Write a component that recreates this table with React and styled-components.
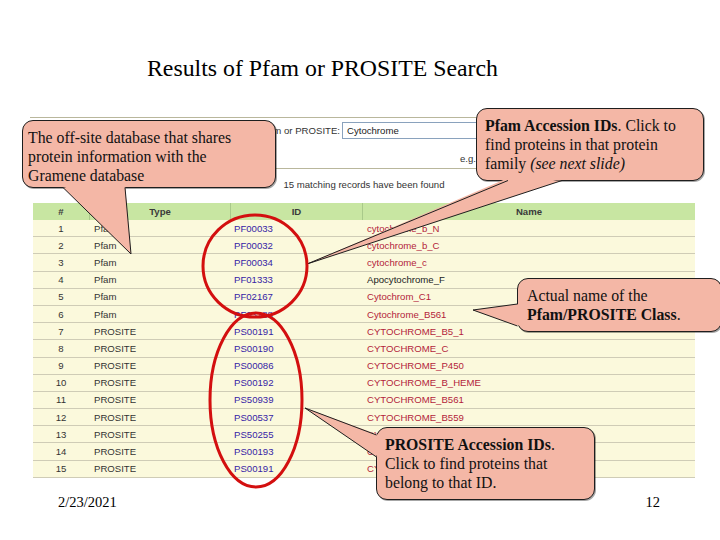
import React from 'react';
import styled, { createGlobalStyle } from 'styled-components';

const Global = createGlobalStyle`
  html, body { margin: 0; padding: 0; background: #fff; }
  body { width: 720px; height: 540px; overflow: hidden; }
`;

const Slide = styled.div`
  position: relative;
  width: 720px;
  height: 540px;
  background: #fff;
  display: flex;
  flex-direction: column;
  font-family: "Liberation Serif", "Times New Roman", serif;
  color: #000;
`;

const Title = styled.h1`
  margin: 54px 0 0 147px;
  font-weight: normal;
  font-size: 23.8px;
  line-height: 28px;
`;

const Panel = styled.div`
  margin: 35px 0 0 30px;
  width: 668px;
  display: flex;
  flex-direction: column;
  font-family: "Liberation Sans", Arial, sans-serif;
  font-size: 9.6px;
  color: #333;
`;

const SearchArea = styled.div`
  height: 50px;
  border-top: 1px solid #b9b79c;
  border-bottom: 1px solid #b9b79c;
  display: flex;
  flex-direction: column;
`;

const SearchRow = styled.div`
  display: grid;
  grid-template-columns: 310px 140px;
  align-items: center;
  column-gap: 2px;
  margin-top: 4px;
`;

const Label = styled.span`
  text-align: right;
`;

const Input = styled.div`
  height: 15px;
  border: 1px solid #8aa2bd;
  padding: 0 4px;
  line-height: 15px;
  color: #222;
`;

const Hint = styled.div`
  margin: 14px 0 0 430px;
`;

const Count = styled.div`
  margin-top: 8px;
  line-height: 16px;
  text-align: center;
`;

const Table = styled.div`
  margin: 10px 0 0 3px;
  width: 662px;
  display: flex;
  flex-direction: column;
`;

const cols = '56px 141px 132px 1fr';

const HeadRow = styled.div`
  display: grid;
  grid-template-columns: ${cols};
  height: 17px;
  background: #c8e6a2;
`;

const HeadCell = styled.div`
  display: flex;
  align-items: center;
  justify-content: center;
  font-weight: bold;
  color: #3a3a3a;
  border-left: ${p => (p.$first ? 'none' : '1px solid #a9c98a')};
`;

const Row = styled.div`
  display: grid;
  grid-template-columns: ${cols};
  height: 17.2px;
  box-sizing: border-box;
  background: #fbf9dc;
  border-bottom: 1px solid #cfccb6;
  align-items: center;
`;

const Cell = styled.div`
  padding-left: ${p => p.$pad || 0}px;
  text-align: ${p => p.$align || 'left'};
  color: ${p => p.$color || '#333'};
  white-space: nowrap;
  overflow: hidden;
`;

const Callout = styled.div`
  position: absolute;
  left: ${p => p.$x}px;
  top: ${p => p.$y}px;
  width: ${p => p.$w}px;
  height: ${p => p.$h}px;
  box-sizing: border-box;
  padding: ${p => p.$pt}px 2px 0 ${p => p.$pl}px;
  background: #f4b7a6;
  border: 1px solid #1e1e1e;
  border-radius: 11px;
  box-shadow: 1px 1px 0 rgba(0, 0, 0, 0.35);
  font-family: "Liberation Serif", "Times New Roman", serif;
  font-size: 15.8px;
  line-height: 19px;
  color: #111;
  white-space: nowrap;
`;

const Overlay = styled.svg`
  position: absolute;
  left: 0;
  top: 0;
  pointer-events: none;
`;

const Footer = styled.div`
  margin-top: 14px;
  padding: 0 60px 0 58px;
  display: flex;
  justify-content: space-between;
  font-size: 14.5px;
  line-height: 20px;
`;

const RED = '#b31d3b';
const BLUE = '#3623a6';

const rows = [
  ['1', 'Pfam', 'PF00033', 'cytochrome_b_N', RED],
  ['2', 'Pfam', 'PF00032', 'cytochrome_b_C', RED],
  ['3', 'Pfam', 'PF00034', 'cytochrome_c', RED],
  ['4', 'Pfam', 'PF01333', 'Apocytochrome_F', '#222'],
  ['5', 'Pfam', 'PF02167', 'Cytochrom_C1', RED],
  ['6', 'Pfam', 'PF03188', 'Cytochrome_B561', RED],
  ['7', 'PROSITE', 'PS00191', 'CYTOCHROME_B5_1', RED],
  ['8', 'PROSITE', 'PS00190', 'CYTOCHROME_C', RED],
  ['9', 'PROSITE', 'PS00086', 'CYTOCHROME_P450', RED],
  ['10', 'PROSITE', 'PS00192', 'CYTOCHROME_B_HEME', RED],
  ['11', 'PROSITE', 'PS50939', 'CYTOCHROME_B561', RED],
  ['12', 'PROSITE', 'PS00537', 'CYTOCHROME_B559', RED],
  ['13', 'PROSITE', 'PS50255', 'CYTOCHROME_B5_2', RED],
  ['14', 'PROSITE', 'PS00193', 'CYTOCHROME_B_QO', RED],
  ['15', 'PROSITE', 'PS00191', 'CYTOCHROME_B5_1', RED],
];

const FILL = '#f4b7a6';

const tails = [
  { base: [[63, 187.5], [125, 187.5]], inner: [[63, 185], [125, 185]], tip: [131, 254] },
  { base: [[508, 180.5], [562, 180.5]], inner: [[508, 178], [562, 178]], tip: [307, 264] },
  { base: [[517.5, 304], [517.5, 326]], inner: [[520, 304], [520, 326]], tip: [473, 310] },
  { base: [[376.5, 435], [376.5, 457]], inner: [[379, 435], [379, 457]], tip: [305, 408] },
];

function Tail({ t }) {
  const [a, b] = t.inner;
  const [c, d] = t.base;
  const [tx, ty] = t.tip;
  return (
    <g>
      <polygon points={`${a[0]},${a[1]} ${b[0]},${b[1]} ${tx},${ty}`} fill={FILL} />
      <polygon points={`${c[0]},${c[1]} ${d[0]},${d[1]} ${tx},${ty}`} fill={FILL} />
      <polyline
        points={`${c[0]},${c[1]} ${tx},${ty} ${d[0]},${d[1]}`}
        fill="none"
        stroke="#1e1e1e"
        strokeWidth="1"
      />
    </g>
  );
}

export default function App() {
  return (
    <>
      <Global />
      <Slide>
        <Title>Results of Pfam or PROSITE Search</Title>
        <Panel>
          <SearchArea>
            <SearchRow>
              <Label>Search Pfam or PROSITE:</Label>
              <Input>Cytochrome</Input>
            </SearchRow>
            <Hint>e.g. Cytochrome, PF00033</Hint>
          </SearchArea>
          <Count>15 matching records have been found</Count>
          <Table>
            <HeadRow>
              <HeadCell $first>#</HeadCell>
              <HeadCell>Type</HeadCell>
              <HeadCell>ID</HeadCell>
              <HeadCell>Name</HeadCell>
            </HeadRow>
            {rows.map(([n, type, id, name, color]) => (
              <Row key={n}>
                <Cell $align="center">{n}</Cell>
                <Cell $pad={5}>{type}</Cell>
                <Cell $pad={4} $color={BLUE}>{id}</Cell>
                <Cell $pad={5} $color={color}>{name}</Cell>
              </Row>
            ))}
          </Table>
        </Panel>
        <Footer>
          <span>2/23/2021</span>
          <span>12</span>
        </Footer>

        <Callout $x={22} $y={120} $w={254} $h={68} $pt={7} $pl={5}>
          The off-site database that shares<br />
          protein information with the<br />
          Gramene database
        </Callout>
        <Callout $x={476} $y={108} $w={228} $h={73} $pt={7} $pl={8}>
          <b>Pfam Accession IDs</b>. Click to<br />
          find proteins in that protein<br />
          family <i>(see next slide)</i>
        </Callout>
        <Callout $x={517} $y={278} $w={205} $h={54} $pt={7} $pl={9}>
          Actual name of the<br />
          <b>Pfam/PROSITE Class</b>.
        </Callout>
        <Callout $x={376} $y={427} $w={219} $h={73} $pt={7} $pl={8}>
          <b>PROSITE Accession IDs</b>.<br />
          Click to find proteins that<br />
          belong to that ID.
        </Callout>

        <Overlay width="720" height="540" viewBox="0 0 720 540">
          {tails.map((t, i) => (
            <Tail key={i} t={t} />
          ))}
          <ellipse cx="255" cy="266" rx="52" ry="51" fill="none" stroke="#d30f0f" strokeWidth="3" />
          <ellipse cx="256" cy="400" rx="46" ry="87" fill="none" stroke="#d30f0f" strokeWidth="3" />
        </Overlay>
      </Slide>
    </>
  );
}
